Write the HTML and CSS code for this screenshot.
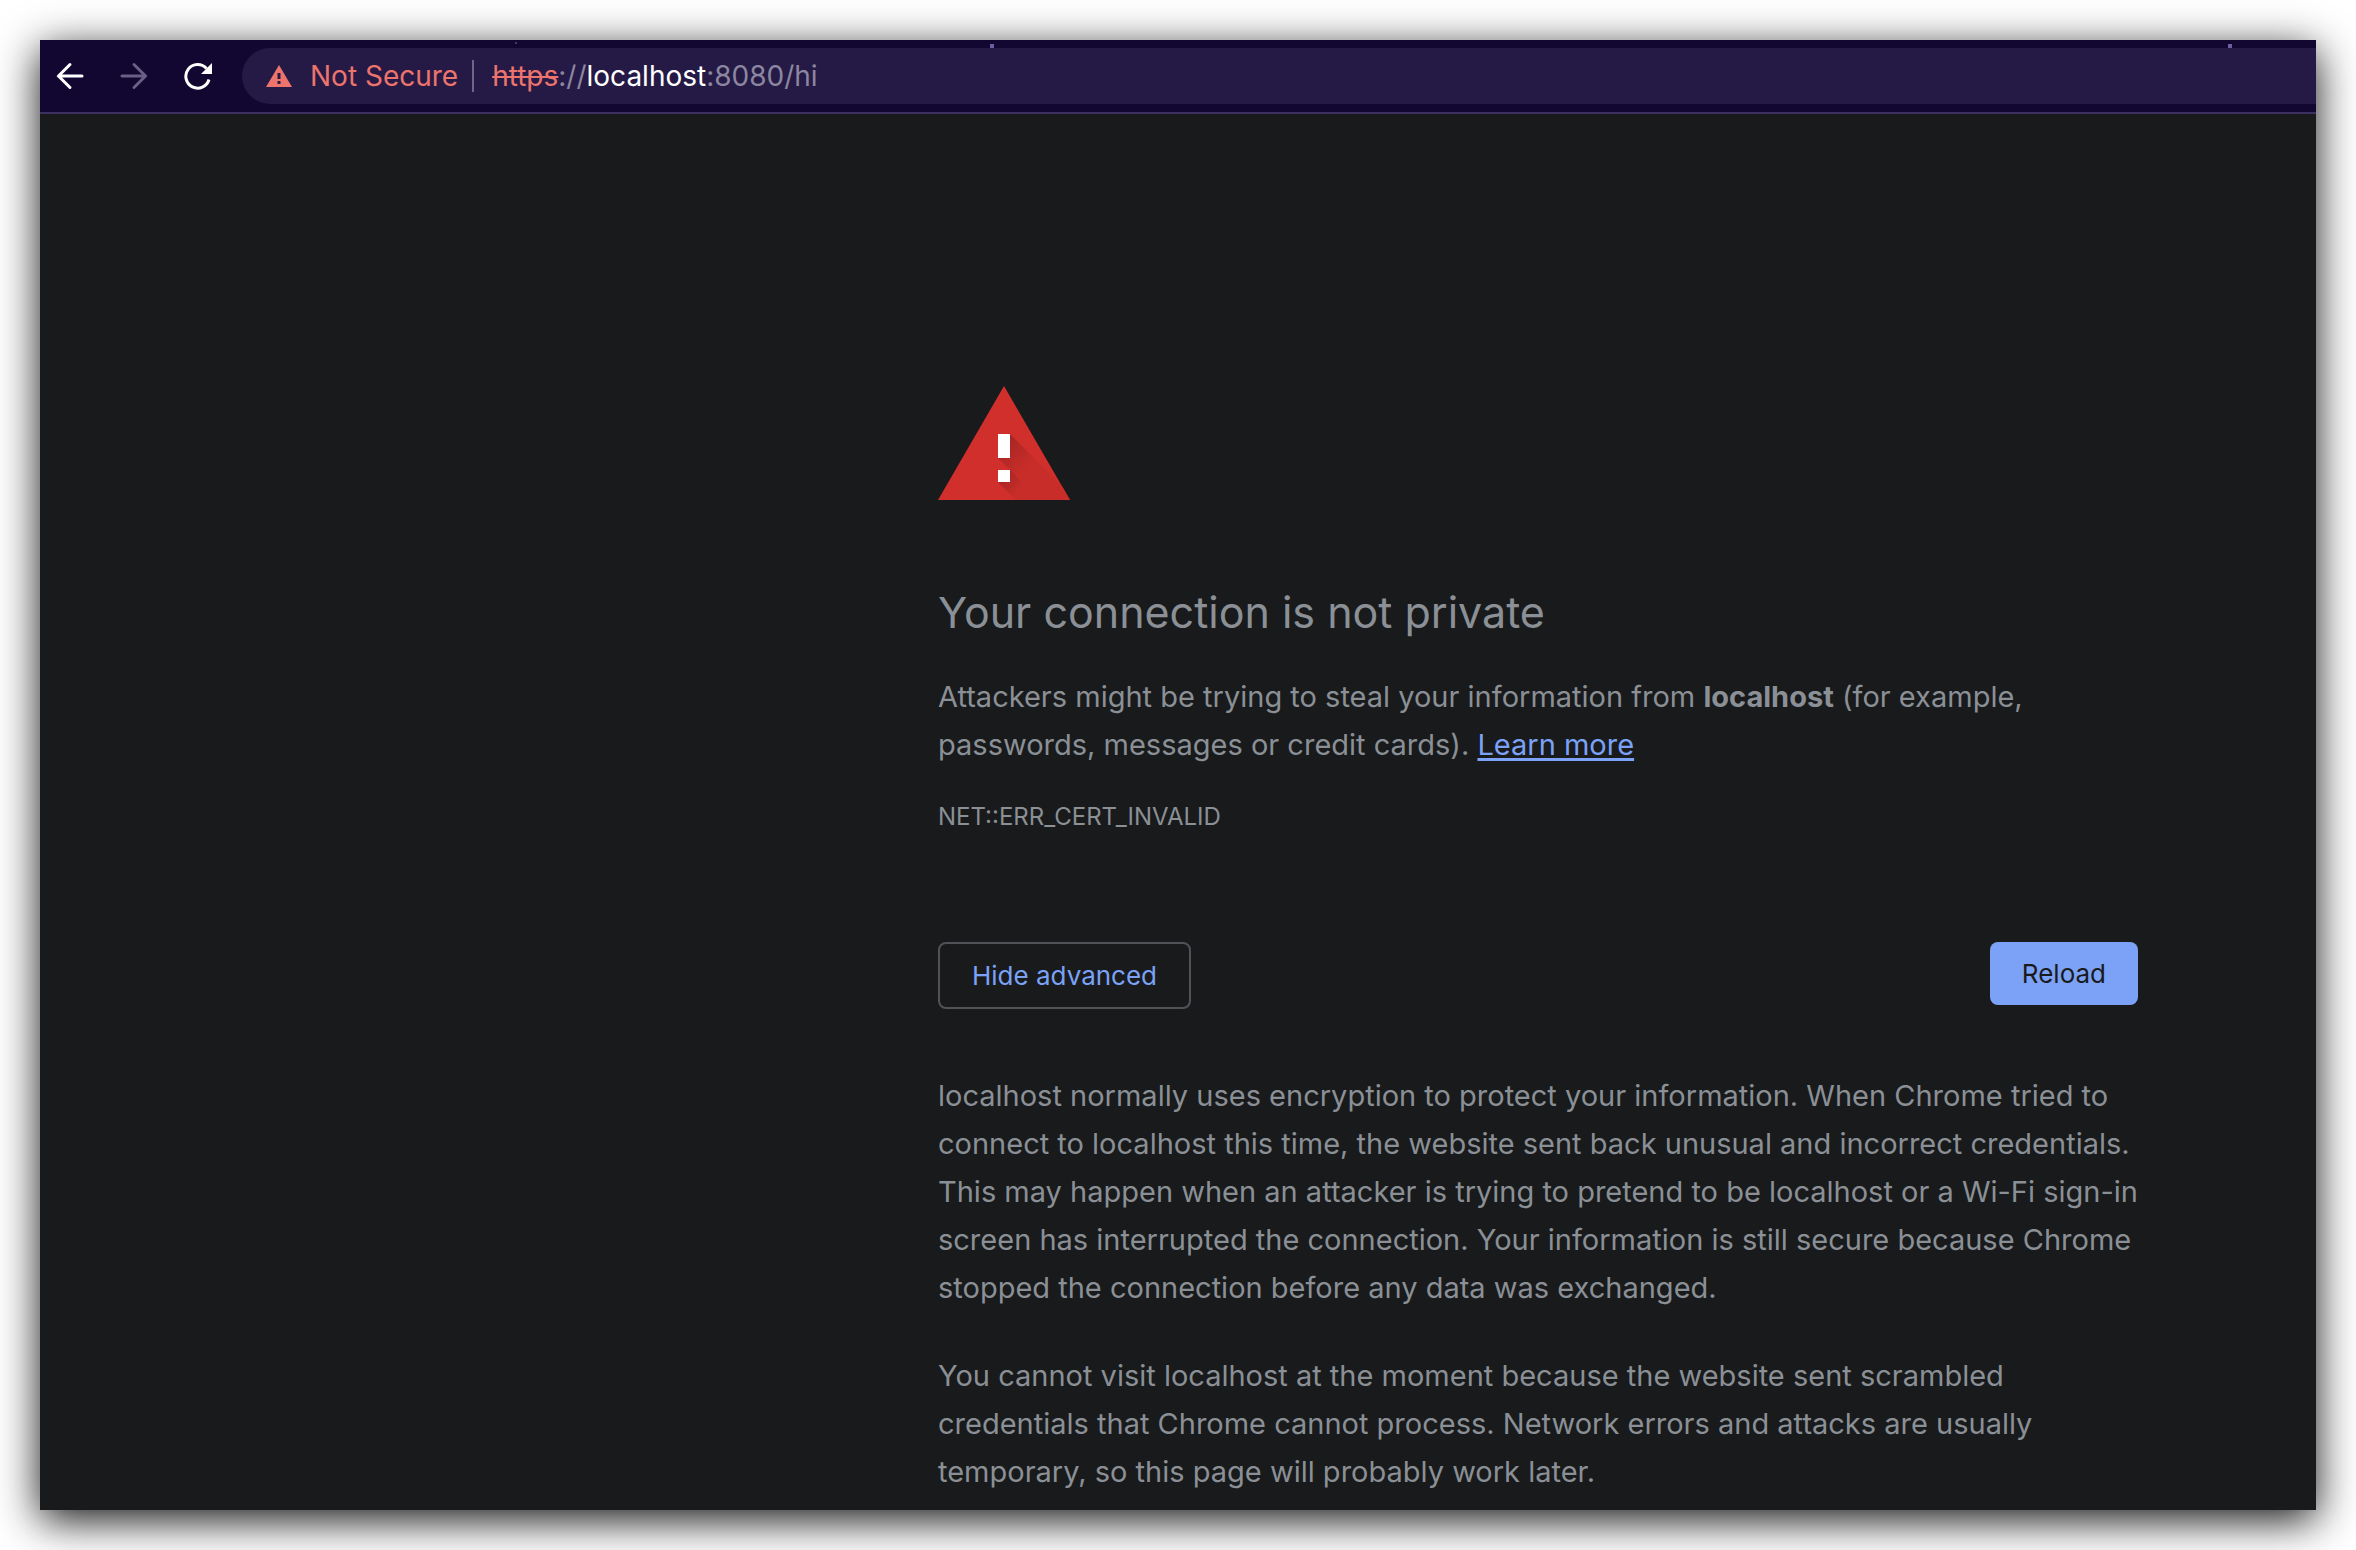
FILE: index.html
```html
<!DOCTYPE html>
<html lang="en">
<head>
<meta charset="utf-8">
<meta name="viewport" content="width=device-width, initial-scale=1">
<title>Privacy error</title>
<link rel="stylesheet" href="styles.css">
</head>
<body>
<div class="window">
  <header class="toolbar">
    <nav class="nav" aria-label="Navigation">
      <button class="nav-button" type="button" aria-label="Back">
        <svg class="nav-icon" viewBox="0 0 28 28"><path d="M26 14H2.500M14 2.500L2.500 14L14 25.500" fill="none" stroke="currentColor" stroke-width="3" stroke-linecap="round"/></svg>
      </button>
      <button class="nav-button nav-button-off" type="button" aria-label="Forward" disabled>
        <svg class="nav-icon" viewBox="0 0 28 28"><path d="M2 14H25.500M14 2.500L25.500 14L14 25.500" fill="none" stroke="currentColor" stroke-width="3" stroke-linecap="round"/></svg>
      </button>
      <button class="nav-button" type="button" aria-label="Reload page">
        <svg class="nav-icon" viewBox="0 0 28 28"><path d="M25 17.500A11.800 11.800 0 1 1 22.500 6.500" fill="none" stroke="currentColor" stroke-width="3"/><path d="M28 1V12H17Z" fill="currentColor"/></svg>
      </button>
    </nav>
    <div class="omnibox">
      <svg class="omnibox-icon" viewBox="0 0 26 22" aria-hidden="true"><path d="M13 0L26 22H0Z" fill="currentColor"/><path d="M11.500 8h3v6h-3zM11.500 16h3v3h-3z" fill="#241a45"/></svg>
      <span class="omnibox-status">Not Secure</span>
      <span class="omnibox-divider"></span>
      <span class="url"><s class="url-scheme">https</s>://<span class="url-host">localhost</span>:8080/hi</span>
    </div>
  </header>
  <main class="interstitial">
    <svg class="warning" viewBox="0 0 132 114" aria-hidden="true">
      <defs>
        <linearGradient id="shade" gradientUnits="userSpaceOnUse" x1="66" y1="54" x2="92" y2="80">
          <stop offset="0" stop-color="#a52624"/><stop offset="1" stop-color="#c92d29"/>
        </linearGradient>
        <linearGradient id="shade-dot" gradientUnits="userSpaceOnUse" x1="66" y1="88" x2="82" y2="104">
          <stop offset="0" stop-color="#a52624"/><stop offset="1" stop-color="#c92d29"/>
        </linearGradient>
        <clipPath id="triangle"><path d="M66 0L132 114H0Z"/></clipPath>
      </defs>
      <g clip-path="url(#triangle)">
        <path d="M0 0H132V114H0Z" fill="#d12f2c"/>
        <path d="M72 48L138 114H102L60 72Z" fill="url(#shade)"/>
        <path d="M72 84L102 114H78L60 96Z" fill="url(#shade-dot)"/>
      </g>
      <path d="M60 48h12v24H60zM60 84h12v12H60z" fill="#fff"/>
    </svg>
    <h1 class="title">Your connection is not private</h1>
    <p class="text">Attackers might be trying to steal your information from <strong>localhost</strong> (for example, passwords, messages or credit cards). <a class="link" href="#">Learn more</a></p>
    <p class="error-code">NET::ERR_CERT_INVALID</p>
    <div class="actions">
      <button class="button button-outline" type="button">Hide advanced</button>
      <button class="button button-primary" type="button">Reload</button>
    </div>
    <div class="details">
      <p class="text">localhost normally uses encryption to protect your information. When Chrome tried to connect to localhost this time, the website sent back unusual and incorrect credentials. This may happen when an attacker is trying to pretend to be localhost or a Wi-Fi sign-in screen has interrupted the connection. Your information is still secure because Chrome stopped the connection before any data was exchanged.</p>
      <p class="text">You cannot visit localhost at the moment because the website sent scrambled credentials that Chrome cannot process. Network errors and attacks are usually temporary, so this page will probably work later.</p>
    </div>
  </main>
</div>
</body>
</html>
```
FILE: styles.css
```css
* {
  box-sizing: border-box;
}

body {
  margin: 0;
  padding: 40px;
  min-height: 100vh;
  display: flex;
  background: #fff;
  color: #8a9095;
  font-family: Inter, "Liberation Sans", sans-serif;
}

h1,
p {
  margin: 0;
}

svg {
  display: block;
}

.window {
  flex: 1;
  background: #191a1c;
  box-shadow: 0 10px 40px rgba(0, 0, 0, 0.92);
}

/* Toolbar */

.toolbar {
  display: flex;
  align-items: center;
  gap: 30px;
  height: 74px;
  padding-left: 16px;
  border-bottom: 2px solid #3c2f62;
  background-color: #110730;
  /* faint stars of the browser theme */
  background-image:
    linear-gradient(#6a5fa0, #6a5fa0),
    linear-gradient(#6a5fa0, #6a5fa0),
    linear-gradient(#41396b, #41396b);
  background-size: 4px 4px, 4px 4px, 2px 2px;
  background-position: 950px 4px, right 84px top 4px, 475px 2px;
  background-repeat: no-repeat;
}

.nav {
  display: flex;
  gap: 36px;
}

.nav-button {
  padding: 0;
  border: 0;
  background: none;
  color: #fff;
}

.nav-button-off {
  color: #6a5f85;
}

.nav-icon {
  width: 28px;
  height: 28px;
}

.omnibox {
  flex: 1;
  display: flex;
  align-items: center;
  height: 56px;
  padding-left: 24px;
  border-radius: 28px 0 0 28px;
  background: #241a45;
  color: #ed746d;
  font-size: 28px;
  line-height: 40px;
}

.omnibox-icon {
  width: 26px;
  height: 22px;
}

.omnibox-status {
  margin-left: 18px;
}

.omnibox-divider {
  width: 2px;
  height: 32px;
  margin: 0 18px 0 14px;
  background: #6f678a;
}

.url {
  color: #8c86a0;
}

.url-scheme {
  color: #ed746d;
}

.url-host {
  color: #fff;
}

/* Warning page */

.interstitial {
  max-width: 1200px;
  margin: 0 178px 0 auto;
  padding-top: 272px;
}

.warning {
  width: 132px;
  height: 114px;
}

.title {
  margin-top: 84px;
  font-size: 43px;
  font-weight: 400;
  line-height: 56px;
}

.title + .text {
  margin-top: 33px;
}

.text {
  font-size: 29px;
  line-height: 48px;
}

.link {
  color: #7ba2f6;
  text-decoration-thickness: 3px;
  text-underline-offset: 3px;
}

.error-code {
  margin-top: 24px;
  font-size: 24px;
  line-height: 48px;
}

.actions {
  display: flex;
  justify-content: space-between;
  align-items: flex-start;
  margin-top: 101px;
}

.button {
  height: 63px;
  padding: 0 32px;
  border: 0;
  border-radius: 8px;
  font: 400 26px/32px Inter, "Liberation Sans", sans-serif;
}

.button-outline {
  height: 67px;
  border: 2px solid #505257;
  background: none;
  color: #7ba2f6;
}

.button-primary {
  background: #7ba2f6;
  color: #191a1c;
}

.details {
  display: grid;
  gap: 40px;
  margin-top: 63px;
}
```
